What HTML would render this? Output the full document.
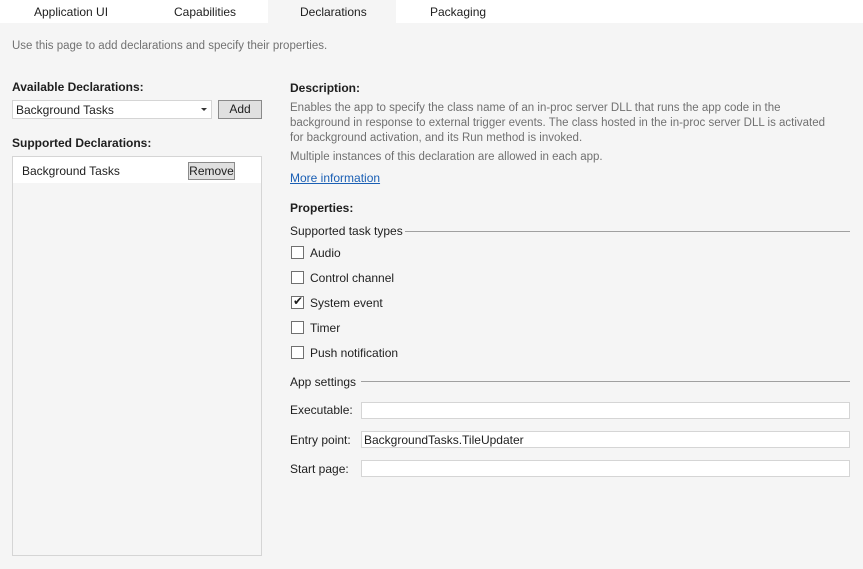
<!DOCTYPE html>
<html><head><style>
body{margin:0;width:863px;height:569px;background:#f5f5f5;font-family:"Liberation Sans",sans-serif;font-size:12px;color:#1e1e1e;position:relative;overflow:hidden}
.a{position:absolute;white-space:nowrap}
.tabs{position:absolute;left:0;top:0;width:863px;height:23px;background:#fff}
.tab{position:absolute;top:5px;font-size:12px}
.g{color:#717171}
.b{font-weight:bold}
.box{position:absolute;background:#fff;border:1px solid #d5d5d5;box-sizing:border-box}
.btn{position:absolute;background:#e0e0e0;border:1px solid #8a8a8a;box-sizing:border-box;text-align:center}
.cb{position:absolute;left:291px;width:13px;height:13px;border:1px solid #707070;background:#fff;box-sizing:border-box}
.line{position:absolute;height:1px;background:#a0a0a0}
</style></head><body>
<div class="tabs"></div>
<div class="a" style="left:268px;top:0;width:128px;height:23px;background:#f5f5f5"></div>
<div class="a tab" style="left:34px">Application UI</div>
<div class="a tab" style="left:174px">Capabilities</div>
<div class="a tab" style="left:300px">Declarations</div>
<div class="a tab" style="left:430px">Packaging</div>
<div class="a g" style="left:12px;top:40px;font-size:11.5px">Use this page to add declarations and specify their properties.</div>
<div class="a b" style="left:12px;top:80px">Available Declarations:</div>
<div class="box" style="left:12px;top:100px;width:200px;height:19px"></div>
<div class="a" style="left:16px;top:103px">Background Tasks</div>
<div class="a" style="left:201px;top:108px;width:0;height:0;border-left:3px solid transparent;border-right:3px solid transparent;border-top:3px solid #333"></div>
<div class="btn" style="left:218px;top:100px;width:44px;height:19px;line-height:17px">Add</div>
<div class="a b" style="left:12px;top:136px">Supported Declarations:</div>
<div class="box" style="left:12px;top:156px;width:250px;height:400px;background:#f5f5f5"></div>
<div class="a" style="left:13px;top:157px;width:248px;height:26px;background:#fff"></div>
<div class="a" style="left:22px;top:164px">Background Tasks</div>
<div class="btn" style="left:188px;top:162px;width:47px;height:18px;line-height:16px">Remove</div>
<div class="a b" style="left:290px;top:81px">Description:</div>
<div class="a g" style="left:290px;top:101px;font-size:11.5px;line-height:15px">Enables the app to specify the class name of an in-proc server DLL that runs the app code in the<br>background in response to external trigger events. The class hosted in the in-proc server DLL is activated<br>for background activation, and its Run method is invoked.</div>
<div class="a g" style="left:290px;top:151px;font-size:11.5px">Multiple instances of this declaration are allowed in each app.</div>
<div class="a" style="left:290px;top:171px;color:#1a5fb4;text-decoration:underline">More information</div>
<div class="a b" style="left:290px;top:201px">Properties:</div>
<div class="a" style="left:290px;top:224px">Supported task types</div>
<div class="line" style="left:405px;top:231px;width:445px"></div>
<div class="cb" style="top:246px"></div><div class="a" style="left:310px;top:246px">Audio</div>
<div class="cb" style="top:271px"></div><div class="a" style="left:310px;top:271px">Control channel</div>
<div class="cb" style="top:296px"></div><div class="a" style="left:293px;top:294px;font-size:12px">✔</div><div class="a" style="left:310px;top:296px">System event</div>
<div class="cb" style="top:321px"></div><div class="a" style="left:310px;top:321px">Timer</div>
<div class="cb" style="top:346px"></div><div class="a" style="left:310px;top:346px">Push notification</div>
<div class="a" style="left:290px;top:375px">App settings</div>
<div class="line" style="left:361px;top:381px;width:489px"></div>
<div class="a" style="left:290px;top:403px">Executable:</div>
<div class="box" style="left:361px;top:402px;width:489px;height:17px"></div>
<div class="a" style="left:290px;top:433px">Entry point:</div>
<div class="box" style="left:361px;top:431px;width:489px;height:17px"></div>
<div class="a" style="left:364px;top:433px">BackgroundTasks.TileUpdater</div>
<div class="a" style="left:290px;top:462px">Start page:</div>
<div class="box" style="left:361px;top:460px;width:489px;height:17px"></div>
</body></html>
